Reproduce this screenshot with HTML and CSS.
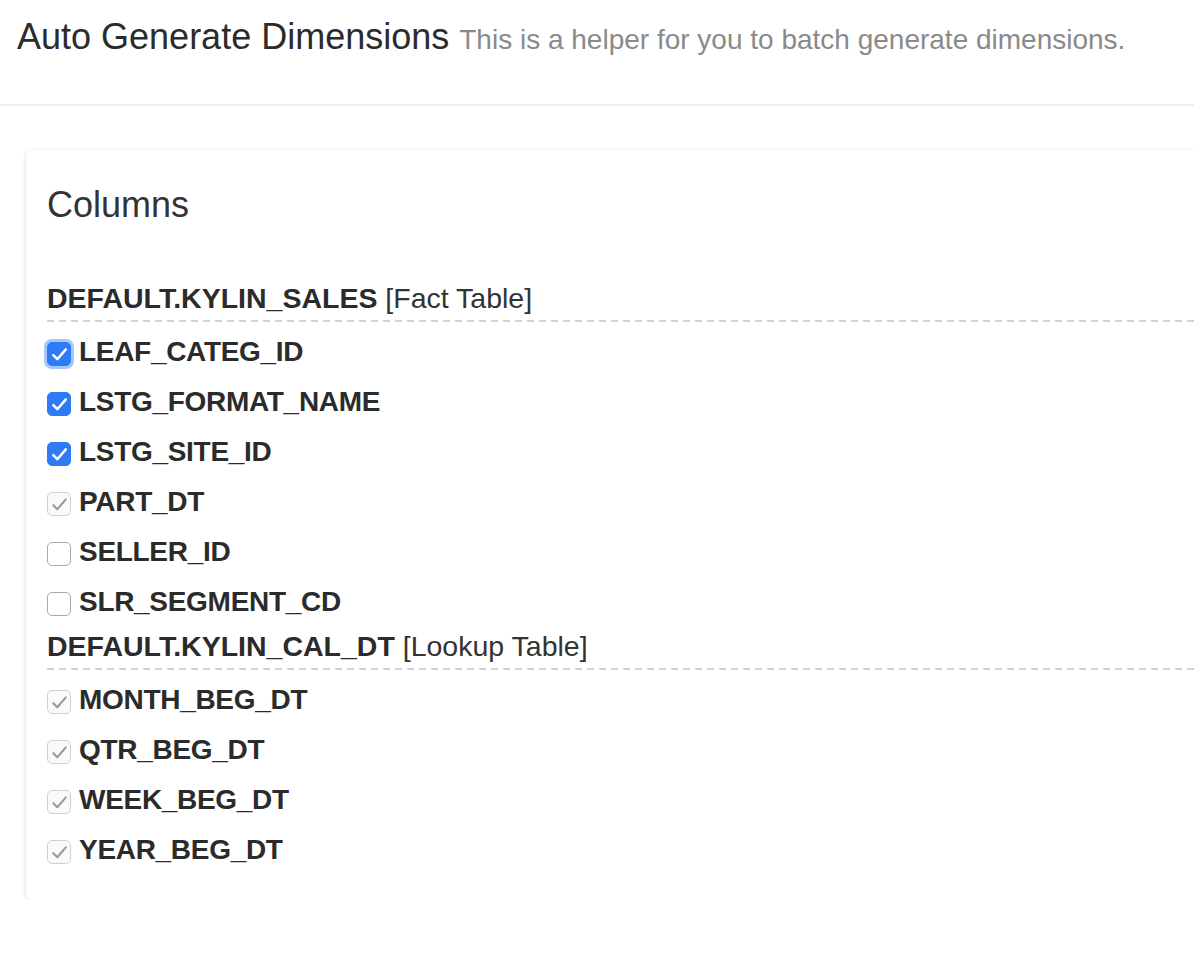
FILE: index.html
```html
<!DOCTYPE html>
<html>
<head>
<meta charset="utf-8">
<title>Auto Generate Dimensions</title>
<link rel="stylesheet" href="styles.css">
</head>
<body>
<div class="modal-header">
  <h4 class="title">Auto Generate Dimensions <small>This is a helper for you to batch generate dimensions.</small></h4>
</div>
<div class="card">
  <h3 class="card-title">Columns</h3>

  <div class="table-head"><b>DEFAULT.KYLIN_SALES</b> [Fact Table]</div>
  <ul class="cols">
    <li><span class="cb checked focus"><svg viewBox="0 0 21 21"><path d="M4.3 11.2l4 4L16.8 5.4"/></svg></span><b>LEAF_CATEG_ID</b></li>
    <li><span class="cb checked"><svg viewBox="0 0 21 21"><path d="M4.3 11.2l4 4L16.8 5.4"/></svg></span><b>LSTG_FORMAT_NAME</b></li>
    <li><span class="cb checked"><svg viewBox="0 0 21 21"><path d="M4.3 11.2l4 4L16.8 5.4"/></svg></span><b>LSTG_SITE_ID</b></li>
    <li><span class="cb disabled"><svg viewBox="0 0 21 21"><path d="M4.3 11.2l4 4L16.8 5.4"/></svg></span><b>PART_DT</b></li>
    <li><span class="cb"></span><b>SELLER_ID</b></li>
    <li><span class="cb"></span><b>SLR_SEGMENT_CD</b></li>
  </ul>

  <div class="table-head"><b>DEFAULT.KYLIN_CAL_DT</b> [Lookup Table]</div>
  <ul class="cols">
    <li><span class="cb disabled"><svg viewBox="0 0 21 21"><path d="M4.3 11.2l4 4L16.8 5.4"/></svg></span><b>MONTH_BEG_DT</b></li>
    <li><span class="cb disabled"><svg viewBox="0 0 21 21"><path d="M4.3 11.2l4 4L16.8 5.4"/></svg></span><b>QTR_BEG_DT</b></li>
    <li><span class="cb disabled"><svg viewBox="0 0 21 21"><path d="M4.3 11.2l4 4L16.8 5.4"/></svg></span><b>WEEK_BEG_DT</b></li>
    <li><span class="cb disabled"><svg viewBox="0 0 21 21"><path d="M4.3 11.2l4 4L16.8 5.4"/></svg></span><b>YEAR_BEG_DT</b></li>
  </ul>
</div>
</body>
</html>
```
FILE: styles.css
```css
html, body {
  margin: 0;
  padding: 0;
  background: #fff;
  overflow: hidden;
}
body {
  font-family: "Liberation Sans", Arial, Helvetica, sans-serif;
  color: #333;
  width: 1194px;
}
.modal-header {
  padding: 17px 17px 47px;
  border-bottom: 2px solid #eeeeee;
}
.title {
  margin: 0;
  font-size: 36px;
  line-height: 40px;
  font-weight: normal;
  color: #2b2b2b;
  white-space: nowrap;
}
.title small {
  font-size: 28px;
  line-height: 1;
  color: #8a8a8a;
}
.card {
  margin: 44px 0 0 26px;
  width: 1300px;
  padding: 35px 0 24px 21px;
  background: #fff;
  border-radius: 6px;
  box-shadow: 0 1px 4px rgba(0, 0, 0, 0.16);
}
.card-title {
  margin: 0;
  font-size: 36px;
  line-height: 40px;
  font-weight: normal;
  color: #333;
}
.table-head {
  margin-top: 54px;
  font-size: 28.5px;
  line-height: 38px;
  color: #333;
  width: 1147px;
  background-image: linear-gradient(to right, #d2d2d2 7px, transparent 7px);
  background-size: 12px 2px;
  background-repeat: repeat-x;
  background-position: 0 100%;
  padding-bottom: 5px;
}
.cols + .table-head {
  margin-top: 0;
}
.table-head b {
  font-weight: bold;
  color: #2b2b2b;
}
.cols {
  list-style: none;
  margin: 5px 0 0;
  padding: 0;
}
.cols li {
  height: 50px;
  display: flex;
  align-items: center;
  font-size: 28px;
  color: #2b2b2b;
}
.cols li b {
  font-weight: bold;
  letter-spacing: -0.3px;
}
.cb {
  box-sizing: border-box;
  width: 24px;
  height: 24px;
  margin: 4px 8px 0 0;
  border: 1.5px solid #a9a9a9;
  border-radius: 5px;
  background: #fff;
  flex: none;
  display: flex;
  align-items: center;
  justify-content: center;
}
.cb svg {
  width: 21px;
  height: 21px;
  fill: none;
  stroke-width: 2.5;
  stroke-linecap: round;
  stroke-linejoin: round;
}
.cb.checked {
  background: #2f7bf5;
  border-color: #2f7bf5;
}
.cb.checked svg {
  stroke: #fff;
}
.cb.focus {
  box-shadow: 0 0 0 3px rgba(85, 155, 250, 0.55);
}
.cb.disabled {
  border-color: #d0d0d0;
  background: #fafafa;
}
.cb.disabled svg {
  stroke: #9a9a9a;
  stroke-width: 2.1;
}
```
